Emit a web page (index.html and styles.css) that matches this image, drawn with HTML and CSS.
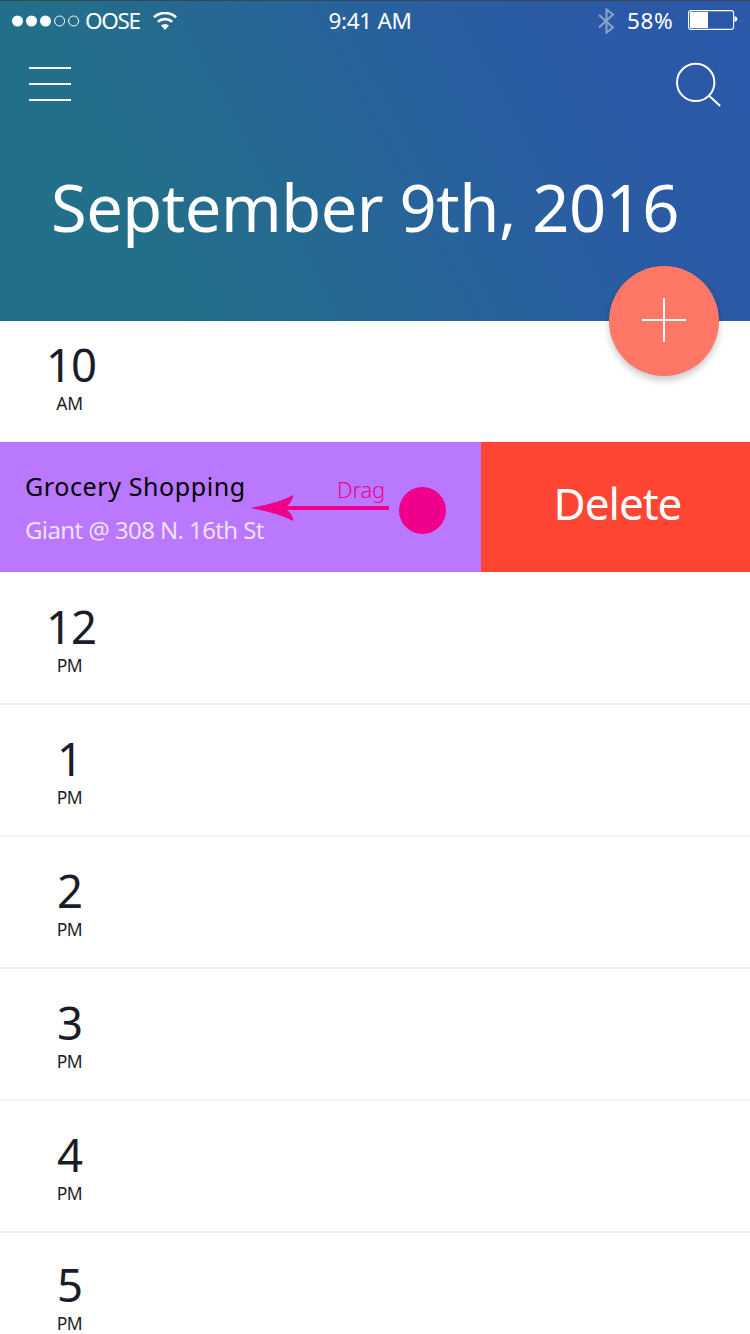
FILE: index.html
```html
<!DOCTYPE html>
<html lang="en">
<head>
<meta charset="utf-8">
<title>Schedule</title>
<link rel="stylesheet" href="styles.css">
</head>
<body>
<header class="header">
  <div class="status">
    <div class="status-left">
      <svg class="signal" width="68" height="12" viewBox="0 0 68 12">
        <g fill="#fff"><circle cx="5.5" cy="6" r="5.5"/><circle cx="19.5" cy="6" r="5.5"/><circle cx="33.5" cy="6" r="5.5"/></g>
        <g fill="none" stroke="#fff"><circle cx="47.6" cy="6" r="5"/><circle cx="61.6" cy="6" r="5"/></g>
      </svg>
      <span class="carrier">OOSE</span>
      <svg class="wifi" width="24" height="18" viewBox="0 0 24 18">
        <g fill="none" stroke="#fff" stroke-width="2.7"><path d="M.9 5.3a16.5 16.5 0 0 1 22.2 0"/><path d="M4.9 9.8a10.6 10.6 0 0 1 14.2 0"/></g>
        <path d="M12 18L8 13.5a5.8 5.8 0 0 1 8 0z" fill="#fff"/>
      </svg>
    </div>
    <span class="clock">9:41 AM</span>
    <div class="status-right">
      <svg class="bluetooth" width="17" height="26" viewBox="0 0 17 26">
        <path d="M1 7l14 12.5-6.5 5V1.500l6.500 5L1 19.500" fill="none" stroke="#fff" stroke-width="2"/>
      </svg>
      <span class="percent">58%</span>
      <svg class="battery" width="50" height="20" viewBox="0 0 50 20">
        <rect x=".6" y=".6" width="45" height="18.800" rx="2.500" fill="none" stroke="#fff" stroke-width="1.100"/>
        <path d="M2 2h18v16H2z" fill="#fff"/>
        <path d="M46.500 6q3 1 3 3t-3 3z" fill="#fff"/>
      </svg>
    </div>
  </div>
  <nav class="toolbar">
    <svg width="42" height="34" viewBox="0 0 42 34"><path d="M0 1h42M0 17h42M0 33h42" stroke="#fff" stroke-width="2"/></svg>
    <svg width="46" height="46" viewBox="0 0 46 46"><g fill="none" stroke="#fff" stroke-width="2"><circle cx="20.700" cy="21.400" r="18.700"/><path d="M33.800 34.500L45.200 45"/></g></svg>
  </nav>
  <h1 class="title">September 9th, 2016</h1>
  <button class="add" aria-label="Add">
    <svg width="44" height="44" viewBox="0 0 44 44"><path d="M0 22h44M22 0v44" stroke="#fff" stroke-width="2"/></svg>
  </button>
</header>
<main>
  <section class="row first"><div class="time"><b class="hour two">10</b><span class="half">AM</span></div></section>
  <section class="swipe">
    <div class="event">
      <div class="details">
        <p class="name">Grocery Shopping</p>
        <p class="place">Giant @ 308 N. 16th St</p>
      </div>
      <div class="hint">
        <span class="drag">Drag</span>
        <svg width="197" height="50" viewBox="0 0 197 50"><path d="M0 22Q27 17.500 43.500 9Q42.500 15.500 37 20H139v4H37Q42.500 28 43.500 35Q27 26.500 0 22z" fill="#ee008c"/><circle cx="172.500" cy="24.500" r="23.500" fill="#ee008c"/></svg>
      </div>
    </div>
    <button class="delete">Delete</button>
  </section>
  <section class="row noon"><div class="time"><b class="hour two">12</b><span class="half">PM</span></div></section>
  <section class="row"><div class="time"><b class="hour">1</b><span class="half">PM</span></div></section>
  <section class="row"><div class="time"><b class="hour">2</b><span class="half">PM</span></div></section>
  <section class="row"><div class="time"><b class="hour">3</b><span class="half">PM</span></div></section>
  <section class="row"><div class="time"><b class="hour">4</b><span class="half">PM</span></div></section>
  <section class="row last"><div class="time"><b class="hour">5</b><span class="half">PM</span></div></section>
</main>
</body>
</html>
```
FILE: styles.css
```css
* { box-sizing: border-box; margin: 0; padding: 0; }
body {
  width: 750px;
  height: 1334px;
  overflow: hidden;
  background: #fff;
  color: #1c1c27;
  font-family: "Noto Sans", "Open Sans", sans-serif;
  white-space: nowrap;
}
svg { display: block; flex: none; }
button { border: 0; font: inherit; color: #fff; }
.header {
  position: relative;
  height: 321px;
  border-top: 1px solid #3b4554;
  background: linear-gradient(62deg, #227088 0%, #236f8a 22%, #256892 40%, #276499 50%, #295ea1 66%, #2b59a7 85%, #2b58a9 100%);
  color: #fff;
}
.status {
  display: grid;
  grid-template-columns: 1fr auto 1fr;
  height: 40px;
  padding: 0 12px;
  font-size: 22.5px;
  line-height: 40px;
}
.status-left, .status-right { display: flex; align-items: flex-start; }
.status-right { justify-content: flex-end; }
.signal { margin-top: 14px; }
.carrier { margin-left: 5px; width: 57px; letter-spacing: -1.3px; }
.wifi { margin: 11px 0 0 11px; }
.clock { width: 86px; margin-right: 7px; letter-spacing: -0.3px; }
.bluetooth { margin-top: 7px; opacity: .45; }
.percent { margin-left: 12px; width: 61px; letter-spacing: 0.6px; }
.battery { margin-top: 9px; }
.toolbar {
  display: flex;
  justify-content: space-between;
  align-items: center;
  height: 86px;
  padding: 0 29px;
}
.title {
  margin-top: 32px;
  padding-left: 51px;
  font-size: 65px;
  font-weight: 400;
  line-height: 96px;
  letter-spacing: -0.5px;
}
.add {
  position: absolute;
  right: 31px;
  bottom: -55px;
  display: grid;
  place-items: center;
  width: 110px;
  height: 110px;
  padding-bottom: 2px;
  border-radius: 50%;
  background: #ff7867;
  box-shadow: 0 4px 7px rgba(0, 0, 0, .22);
}
.row {
  height: 132px;
  padding-top: 30px;
  border-bottom: 2px solid #f2f2f2;
}
.row.first { height: 121px; padding-top: 20px; border-bottom-width: 1px; }
.row.noon { height: 133px; padding-top: 31px; }
.row.last { height: 101px; padding-top: 28px; border: 0; }
.time {
  display: flex;
  flex-direction: column;
  align-items: center;
  width: 140px;
}
.hour { font-size: 45.5px; font-weight: 400; line-height: 46px; }
.two { margin-left: 2px; letter-spacing: -1px; }
.half { font-size: 17.5px; font-weight: 400; line-height: 24px; margin: 4px 1px 0 0; letter-spacing: -0.4px; }
.swipe { display: flex; height: 130px; }
.event {
  display: flex;
  width: 481px;
  background: #ba77ff;
}
.details { width: 250px; padding: 26px 0 0 25px; }
.name { font-size: 25px; line-height: 36px; color: #000; letter-spacing: 0.6px; }
.place { font-size: 24px; line-height: 36px; margin-top: 8px; color: #eee0ff; letter-spacing: -0.6px; }
.hint { width: 197px; padding-top: 32px; color: #ee008c; }
.drag { display: block; padding-left: 87px; height: 12px; font-size: 22px; font-weight: 300; line-height: 31px; letter-spacing: -0.2px; }
.delete {
  flex: 1;
  padding: 0 0 9px 4px;
  background: #ff4533;
  font-size: 44px;
  letter-spacing: -1px;
}
```
